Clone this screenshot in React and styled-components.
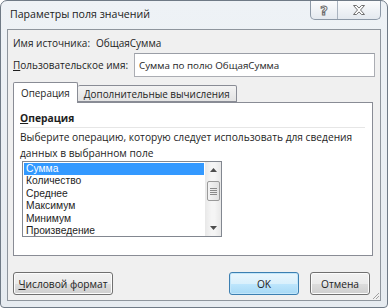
import React from 'react';
import styled, { createGlobalStyle } from 'styled-components';

const GlobalStyle = createGlobalStyle`
  html, body {
    margin: 0;
    padding: 0;
    background: #ffffff;
  }
  body {
    font-family: "Open Sans", "Liberation Sans", sans-serif;
    font-size: 10.5px;
    color: #1e1e1e;
  }
`;

const Window = styled.div`
  width: 388px;
  height: 308px;
  box-sizing: border-box;
  border: 1px solid #6f7a86;
  border-radius: 7px 7px 4px 4px;
  background: linear-gradient(#eef2f6, #e6ebf0);
  display: flex;
  flex-direction: column;
  overflow: hidden;
`;

const TitleBar = styled.div`
  height: 28px;
  display: flex;
  align-items: flex-start;
  flex-shrink: 0;
`;

const Title = styled.div`
  padding: 6px 0 0 9px;
  font-size: 10.6px;
  color: #1a1a1a;
  flex: 1;
`;

const CaptionGroup = styled.div`
  display: flex;
  margin-right: 6px;
  border: 1px solid #8d99a7;
  border-top: none;
  border-radius: 0 0 5px 5px;
  overflow: hidden;
  background: linear-gradient(#fbfcfd, #e4e9ef);
`;

const CaptionButton = styled.div`
  width: ${p => p.$w}px;
  height: 18px;
  display: flex;
  align-items: center;
  justify-content: center;
  border-left: ${p => (p.$first ? 'none' : '1px solid #a9b3bf')};
`;

const HelpGlyph = styled.span`
  font-family: "DejaVu Sans", sans-serif;
  font-weight: bold;
  font-size: 13px;
  line-height: 13px;
  color: #ffffff;
  -webkit-text-stroke: 1px #6b6b6b;
`;

const Client = styled.div`
  flex: 1;
  margin: 0 6px 6px 6px;
  border: 1px solid #8e959d;
  background: #f0f0f0;
  padding: 5px 7px 0 5px;
  display: flex;
  flex-direction: column;
  position: relative;
`;

const FieldRow = styled.div`
  display: flex;
  align-items: center;
  height: ${p => p.$h}px;
  margin-top: ${p => p.$mt || 0}px;
  font-size: 10px;
`;

const Label = styled.div`
  width: ${p => p.$w}px;
  flex-shrink: 0;
  white-space: nowrap;
`;

const Access = styled.span`
  text-decoration: underline;
  text-underline-offset: 1px;
`;

const TextInput = styled.div`
  flex: 1;
  height: 24px;
  box-sizing: border-box;
  margin-right: -2px;
  border: 1px solid #abadb3;
  border-top-color: #9a9ea6;
  background: #ffffff;
  display: flex;
  align-items: center;
  padding-left: 4px;
  font-size: 9.8px;
`;

const TabStrip = styled.div`
  display: flex;
  align-items: flex-end;
  height: 20px;
  margin-top: 5px;
  position: relative;
  z-index: 1;
`;

const Tab = styled.div`
  box-sizing: border-box;
  height: ${p => (p.$active ? 21 : 17)}px;
  padding: 0 ${p => (p.$active ? 7 : 6)}px;
  border: 1px solid #898c95;
  border-bottom: ${p => (p.$active ? 'none' : '1px solid #898c95')};
  border-left: ${p => (p.$active ? '1px solid #898c95' : 'none')};
  border-radius: 2px 2px 0 0;
  background: ${p => (p.$active ? '#ffffff' : 'linear-gradient(#f3f3f3, #e3e3e3)')};
  display: flex;
  align-items: center;
  font-size: 9.9px;
  margin-bottom: ${p => (p.$active ? -1 : 0)}px;
`;

const Panel = styled.div`
  height: 154px;
  box-sizing: border-box;
  border: 1px solid #898c95;
  background: #ffffff;
  padding: 7px 6px 0 6px;
  display: flex;
  flex-direction: column;
`;

const Heading = styled.div`
  font-weight: bold;
  font-size: 10.3px;
  height: 16px;
  line-height: 16px;
  border-bottom: 1px solid #e6e6e6;
  padding-bottom: 1px;
  margin-right: 1px;
`;

const Hint = styled.div`
  margin-top: 1px;
  line-height: 16px;
  font-size: 10.2px;
`;

const ListBox = styled.div`
  width: 200px;
  height: 76px;
  box-sizing: border-box;
  margin: 0 0 0 2px;
  border: 1px solid #828790;
  display: flex;
  background: #ffffff;
`;

const Items = styled.div`
  flex: 1;
  padding: 1px 1px 0 1px;
`;

const Item = styled.div`
  height: 12.4px;
  line-height: 12.4px;
  font-family: "Liberation Sans", Arial, sans-serif;
  font-size: 10.3px;
  padding-left: 2px;
  overflow: hidden;
  background: ${p => (p.$selected ? '#3399ff' : 'transparent')};
  color: ${p => (p.$selected ? '#ffffff' : '#1e1e1e')};
`;

const ScrollBar = styled.div`
  width: 16px;
  background: linear-gradient(90deg, #e8e8e8, #f5f5f5 40%, #f5f5f5 60%, #e8e8e8);
  display: flex;
  flex-direction: column;
  align-items: center;
`;

const Arrow = styled.div`
  height: 16px;
  display: flex;
  align-items: center;
  justify-content: center;
`;

const Thumb = styled.div`
  width: 13px;
  height: 20px;
  margin-top: 3px;
  box-sizing: border-box;
  border: 1px solid #9a9a9a;
  border-radius: 2px;
  background: linear-gradient(90deg, #f4f4f4, #e2e2e2);
  display: flex;
  align-items: center;
  justify-content: center;
`;

const ButtonRow = styled.div`
  display: flex;
  align-items: center;
  margin-top: 16px;
  padding-right: 3px;
`;

const Button = styled.div`
  width: ${p => p.$w}px;
  height: 23px;
  box-sizing: border-box;
  border: 1px solid ${p => (p.$default ? '#3c7fb1' : '#707070')};
  border-radius: 3px;
  background: ${p =>
    p.$default
      ? 'linear-gradient(#eaf6fd 0%, #d9f0fc 50%, #bee6fd 51%, #a7d9f5 100%)'
      : 'linear-gradient(#f2f2f2 0%, #ebebeb 50%, #dddddd 51%, #cfcfcf 100%)'};
  box-shadow: inset 0 0 0 1px ${p => (p.$default ? '#c2e6fa' : '#fcfcfc')};
  display: flex;
  align-items: center;
  justify-content: center;
  font-size: 10.2px;
  margin-left: ${p => p.$ml || 0}px;
`;

const Spacer = styled.div`
  flex: 1;
`;

const Grip = styled.svg`
  position: absolute;
  right: 0;
  bottom: 0;
`;

const items = ['Сумма', 'Количество', 'Среднее', 'Максимум', 'Минимум', 'Произведение'];

export default function App() {
  return (
    <>
      <GlobalStyle />
      <Window>
        <TitleBar>
          <Title>Параметры поля значений</Title>
          <CaptionGroup>
            <CaptionButton $w={26} $first>
              <HelpGlyph>?</HelpGlyph>
            </CaptionButton>
            <CaptionButton $w={42}>
              <svg width="14" height="12" viewBox="0 0 14 12">
                <path
                  d="M1.5 1.5h3l2.5 2.6 2.5-2.6h3l-4 4.5 4 4.5h-3l-2.5-2.6-2.5 2.6h-3l4-4.5z"
                  fill="#ffffff"
                  stroke="#707070"
                  strokeWidth="1"
                  strokeLinejoin="round"
                />
              </svg>
            </CaptionButton>
          </CaptionGroup>
        </TitleBar>
        <Client>
          <FieldRow $h={16}>
            <Label $w={83}>Имя источника:</Label>
            <span>ОбщаяСумма</span>
          </FieldRow>
          <FieldRow $h={24} $mt={2}>
            <Label $w={121}>
              <Access>П</Access>ользовательское имя:
            </Label>
            <TextInput>Сумма по полю ОбщаяСумма</TextInput>
          </FieldRow>
          <TabStrip>
            <Tab $active>Операция</Tab>
            <Tab>Дополнительные вычисления</Tab>
          </TabStrip>
          <Panel>
            <Heading>
              <Access>О</Access>перация
            </Heading>
            <Hint>
              Выберите операцию, которую следует использовать для сведения
              <br />
              данных в выбранном поле
            </Hint>
            <ListBox>
              <Items>
                {items.map((t, i) => (
                  <Item key={t} $selected={i === 0}>
                    {t}
                  </Item>
                ))}
              </Items>
              <ScrollBar>
                <Arrow>
                  <svg width="7" height="4" viewBox="0 0 7 4">
                    <path d="M0 4L3.5 0 7 4z" fill="#4d4d4d" />
                  </svg>
                </Arrow>
                <Thumb>
                  <svg width="7" height="7" viewBox="0 0 7 7">
                    <path d="M0 0.5h7M0 2.5h7M0 4.5h7M0 6.5h7" stroke="#8a8a8a" strokeWidth="1" />
                  </svg>
                </Thumb>
                <Spacer />
                <Arrow>
                  <svg width="7" height="4" viewBox="0 0 7 4">
                    <path d="M0 0L3.5 4 7 0z" fill="#4d4d4d" />
                  </svg>
                </Arrow>
              </ScrollBar>
            </ListBox>
          </Panel>
          <ButtonRow>
            <Button $w={100}>
              <span>
                <Access>Ч</Access>исловой формат
              </span>
            </Button>
            <Spacer />
            <Button $w={70} $default>OK</Button>
            <Button $w={60} $ml={11}>Отмена</Button>
          </ButtonRow>
          <Grip width="9" height="9" viewBox="0 0 9 9">
            <path d="M8 2L2 8M8 5L5 8" stroke="#a0a0a0" strokeWidth="1" />
          </Grip>
        </Client>
      </Window>
    </>
  );
}
